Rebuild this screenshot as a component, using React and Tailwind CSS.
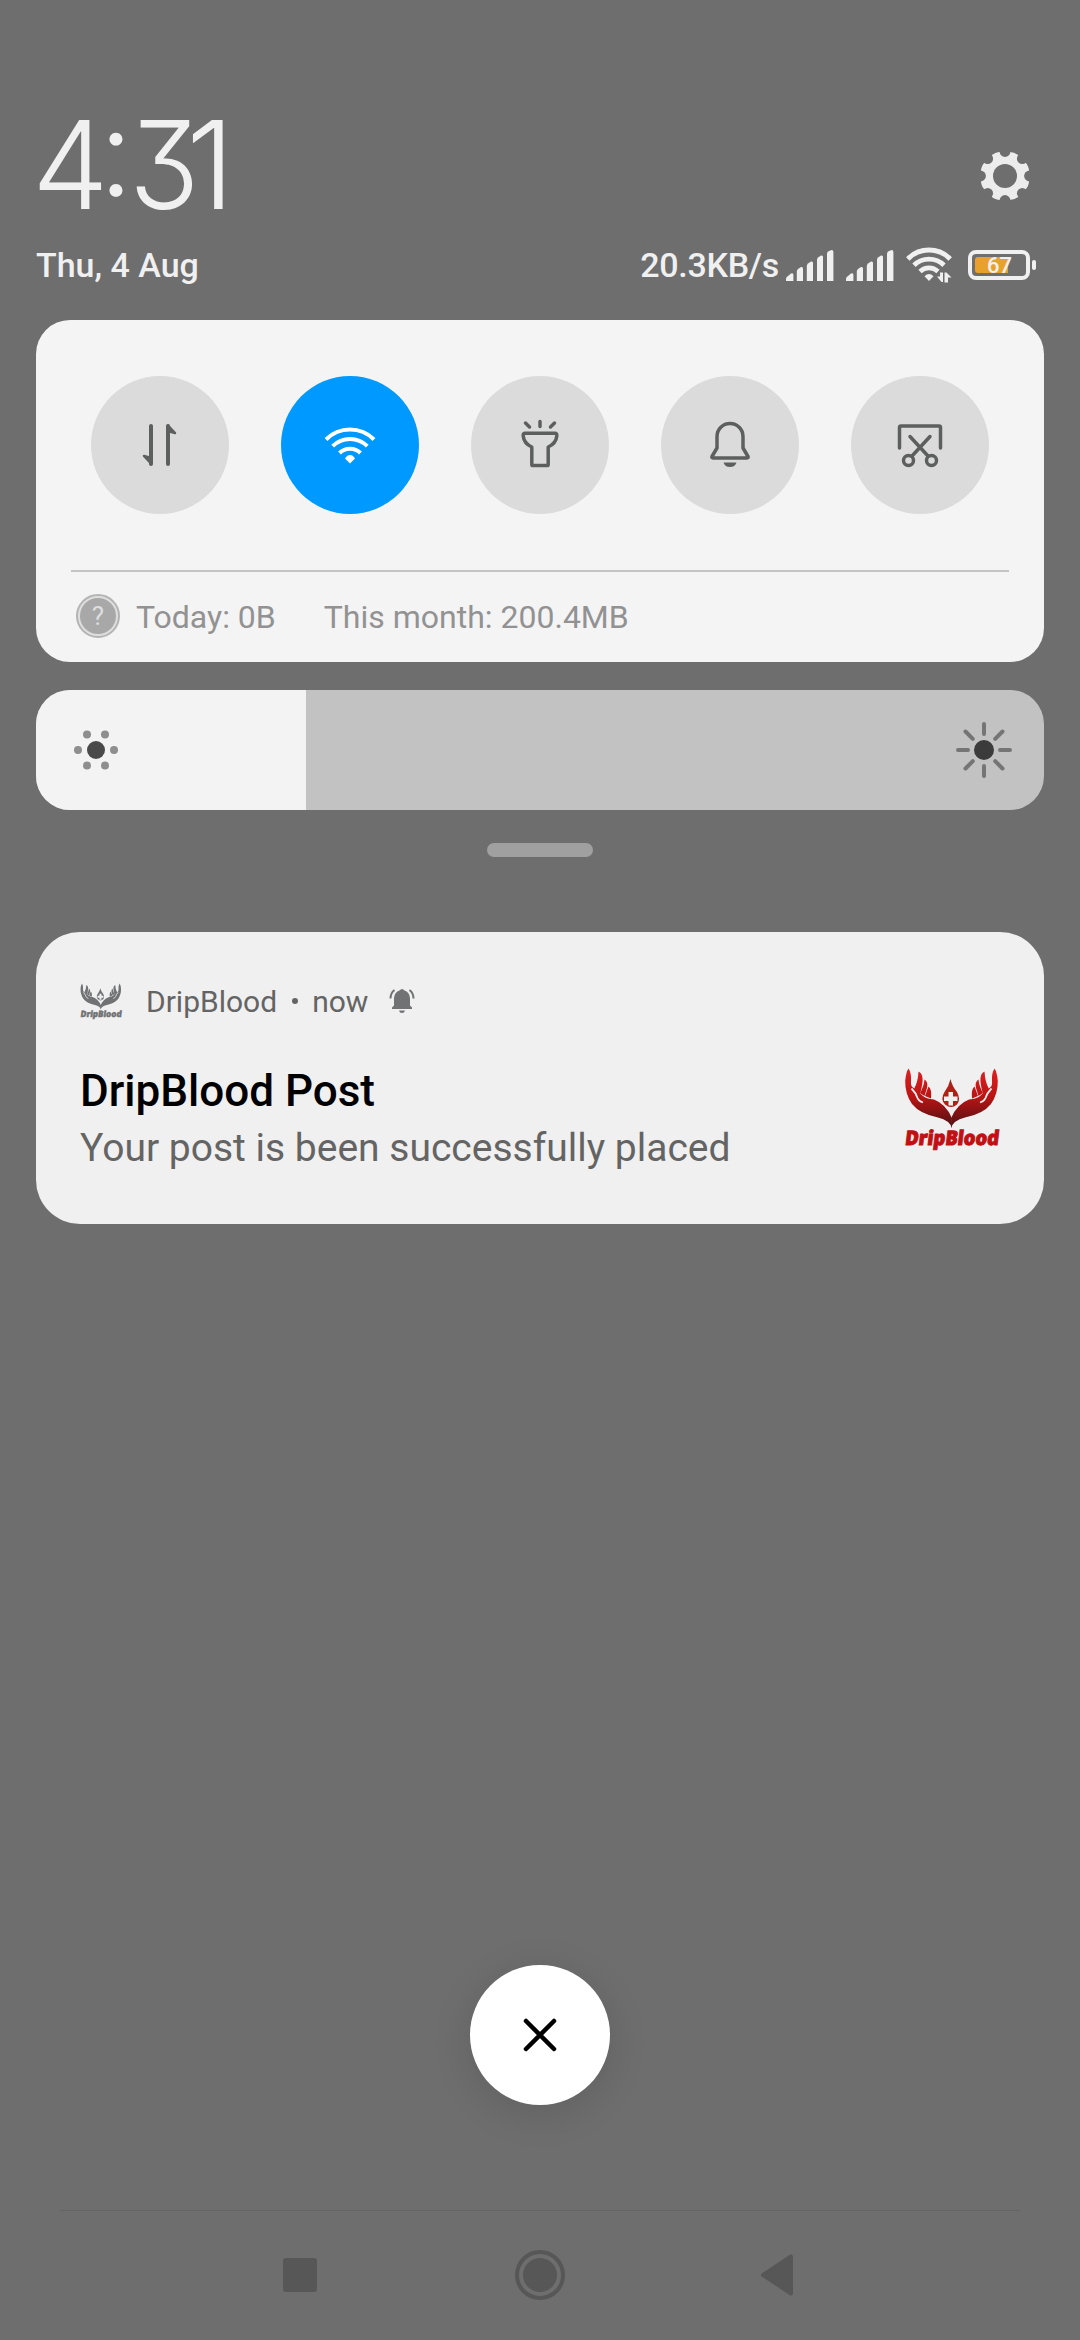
import React from "react";

function Clock() {
  return (
    <div className="flex h-[122px] items-start font-['Inter'] text-[122px] leading-[122px] font-[290] text-[#f0f0f0] [font-feature-settings:'cv09','case']">
      <span className="ml-[-4px] tracking-[-10px]">4</span>
      <span className="tracking-[-4px]">:</span>
      <span className="origin-left scale-x-[0.95] tracking-[-17px]">3</span>
      <span>1</span>
    </div>
  );
}

function Gear() {
  const teeth = [22.5, 67.5, 112.5, 157.5, 202.5, 247.5, 292.5, 337.5];
  const notches = [0, 45, 90, 135, 180, 225, 270, 315];
  return (
    <svg className="size-[50px]" viewBox="-25 -25 50 50">
      <defs>
        <mask id="gear">
          <circle r="20.5" fill="#fff" />
          {teeth.map((a) => (
            <path key={a} d="M-9 -14 L-5 -24 Q0 -26 5 -24 L9 -14Z" fill="#fff" transform={`rotate(${a})`} />
          ))}
          {notches.map((a) => (
            <circle key={a} cx="0" cy="-24.5" r="5.4" fill="#000" transform={`rotate(${a})`} />
          ))}
          <circle r="12" fill="#000" />
        </mask>
      </defs>
      <rect x="-25" y="-25" width="50" height="50" fill="#ececec" mask="url(#gear)" />
    </svg>
  );
}

function Signal({ className }) {
  return (
    <svg className={className} width="48" height="31" viewBox="0 0 48 31" fill="#f0f0f0">
      <path d="M0 31V29Q0 27 2 26L5 23.6Q7.400 22.500 7.400 25V31Z" />
      <path d="M10.800 31V21.500Q10.800 20 12 19L15 17Q17 16.500 17 18.500V31Z" />
      <path d="M20.800 31V16Q20.800 14.500 22 13.500L25 11.500Q27 11 27 13V31Z" />
      <path d="M31 31V10Q31 8.500 32 7.500L35 5.500Q37 5 37 7V31Z" />
      <path d="M41 31V4Q41 2.500 42 1.500L45 0.200Q47.400 -.3 47.400 2V31Z" />
    </svg>
  );
}

function StatusWifi({ className }) {
  return (
    <svg className={className} width="47" height="36" viewBox="0 0 47 36" fill="none" stroke="#f0f0f0">
      <path d="M1.800 12A29.500 29.500 0 0 1 44.200 12" strokeWidth="4.800" />
      <path d="M8 18.200A21.500 21.500 0 0 1 38 18.200" strokeWidth="4.800" />
      <path d="M14 24.500A13 13 0 0 1 32 24.500" strokeWidth="4.600" />
      <path d="M18.500 29.300Q23 24.500 27.500 29.300L23 34Z" fill="#f0f0f0" stroke="none" />
      <path d="M31 29.500H34V25.500H37V35H35.500ZM38.500 35.500V25.500H40.500L45.500 30.500H42V35.500Z" fill="#f0f0f0" stroke="none" />
    </svg>
  );
}

function Battery({ className }) {
  return (
    <div className={`flex items-center gap-[2px] ${className}`}>
      <div className="relative h-[30px] w-[62px] rounded-[8px] border-4 border-[#f0f0f0]">
        <div className="mt-[3px] ml-[3px] h-4 w-[33px] rounded-l-[3px] bg-[#e8a22c]" />
        <span className="absolute top-0 left-[15px] font-['Roboto'] text-[22px] leading-6 font-medium text-[#f0f0f0]">67</span>
      </div>
      <div className="h-[10px] w-1 rounded-[2px] bg-[#f0f0f0]" />
    </div>
  );
}

const icons = {
  data: (
    <g fill="#5d5f5f" stroke="#5d5f5f" strokeWidth="4" strokeLinecap="round" strokeLinejoin="round">
      <path d="M-9 -19V19" />
      <path d="M-16 11L-9 13V18.500Z" strokeWidth="2.500" />
      <path d="M8 19V-19" />
      <path d="M15 -12L8 -14V-19.500Z" strokeWidth="2.500" />
    </g>
  ),
  wifi: (
    <g fill="none" stroke="#fff" strokeWidth="4">
      <path d="M-24 -5.500A34 34 0 0 1 24 -5.500" />
      <path d="M-17.300 1.200A24.500 24.500 0 0 1 17.300 1.200" />
      <path d="M-10.500 8A15 15 0 0 1 10.500 8" />
      <path d="M-5 13.500L-3 11Q0 9 3 11L5 13.500L0 18.500Z" fill="#fff" stroke="none" />
    </g>
  ),
  torch: (
    <g fill="none" stroke="#5d5f5f" strokeWidth="3.500" strokeLinecap="round" strokeLinejoin="round">
      <path d="M-15.500 -11.800H15.500Q17 -11.800 16.800 -9Q16 -1.500 8.200 2V19.500Q8.200 20.600 7 20.600H-7Q-8.200 20.600 -8.200 19.500V2Q-16 -1.500 -16.800 -9Q-17 -11.800 -15.500 -11.800Z" />
      <path d="M0 -23.500V-18.500M-14.500 -22L-10.500 -18M14.500 -22L10.500 -18" />
    </g>
  ),
  bell: (
    <g fill="none" stroke="#5d5f5f" strokeWidth="3.500" strokeLinecap="round" strokeLinejoin="round">
      <path d="M-13 3V-8.500A13 13 0 0 1 13 -8.500V3L18 11.500Q18.600 13 17 13H-17Q-18.600 13 -18 11.500Z" />
      <path d="M-6.500 17.500H6.500Q5 22 0 22Q-5 22 -6.500 17.500Z" fill="#5d5f5f" stroke="none" />
    </g>
  ),
  shot: (
    <g fill="none" stroke="#5d5f5f" strokeWidth="3.500" strokeLinecap="round" strokeLinejoin="round">
      <path d="M-20.500 3V-17.500Q-20.500 -19 -19 -19H19Q20.500 -19 20.500 -17.500V3" />
      <path d="M-10 -8.500L8 11M10 -8.500L-8 11" />
      <circle cx="-11.500" cy="15.500" r="5" />
      <circle cx="11.500" cy="15.500" r="5" />
    </g>
  ),
};

function Toggle({ icon, active }) {
  return (
    <div className={`flex size-[138px] items-center justify-center rounded-full ${active ? "bg-[#0099ff]" : "bg-[#dbdbdb]"}`}>
      <svg width="60" height="60" viewBox="-30 -30 60 60">{icons[icon]}</svg>
    </div>
  );
}

function Hand({ fill, cut }) {
  return (
    <g fill={fill}>
      <path d="M47.800 60Q46 52.500 34 49.500Q16 46 8 36Q1 26 1.200 13Q2 4 4.500 0.500Q7.500 5 7 13Q6.500 18 9 19.500Q14 23 19 28Q22 30.500 30 31.500Q42 36 47.800 50Z" />
      <path d="M10 21Q14 14 14.500 3.500Q19.500 6 18.500 14Q18 19 16 26Z" />
      <path d="M16 25Q20 18 20.500 11.500Q24.500 14 23 20L20.500 28Z" />
      <path d="M21 28L24.500 18.500Q28 21 27 30.500Z" />
      <path d="M7.500 20.500Q12 25 13.500 30Q15 33.500 19 34.500" fill="none" stroke={cut} strokeWidth="1.800" />
    </g>
  );
}

function Logo({ className = "", width, height, hand, drop, text, cut, id }) {
  return (
    <svg className={`overflow-visible ${className}`} width={width} height={height} viewBox="0 0 96 83">
      <defs>
        <linearGradient id={id} x1="0" y1="0" x2="0" y2="60" gradientUnits="userSpaceOnUse">
          <stop offset="0" stopColor={hand[0]} />
          <stop offset="0.500" stopColor={hand[1]} />
          <stop offset="1" stopColor={hand[2]} />
        </linearGradient>
      </defs>
      <Hand fill={`url(#${id})`} cut={cut} />
      <g transform="translate(95 0) scale(-1 1)">
        <Hand fill={`url(#${id})`} cut={cut} />
      </g>
      <path d="M46.500 11Q48 18 53 24Q57 31 53 36.500Q47 41.500 41 36.500Q36 31 40.500 24Q45 18 46.500 11Z" fill={drop} />
      <path d="M44.500 24H49V28.500H53.500V33H49V37.500H44.500V33H40V28.500H44.500Z" fill={cut} />
      <text x="0" y="0" transform="translate(0.500 77.300) skewX(-7)" textLength="94" lengthAdjust="spacingAndGlyphs" fontFamily="Open Sans" fontWeight="800" fontSize="20" fill={text} stroke={text} strokeWidth="1">
        DripBlood
      </text>
    </svg>
  );
}

function Header() {
  return (
    <header>
      <div className="flex h-[240px] items-start justify-between pt-[104px] pr-[50px] pl-9">
        <Clock />
        <div className="pt-[47px]">
          <Gear />
        </div>
      </div>
      <div className="flex h-[50px] items-center pr-11 pl-9 text-[34px] leading-[50px] font-medium text-[#f0f0f0]">
        <span>Thu, 4 Aug</span>
        <div className="ml-auto flex h-[50px] items-center">
          <span className="tracking-[-0.300px]">20.3KB/s</span>
          <Signal className="ml-[7px]" />
          <Signal className="ml-3" />
          <StatusWifi className="ml-3" />
          <Battery className="ml-[15px]" />
        </div>
      </div>
    </header>
  );
}

export default function App() {
  return (
    <div className="flex h-[2340px] w-[1080px] flex-col overflow-hidden bg-[#6e6e6e] font-['Roboto',sans-serif]">
      <Header />

      <section className="mx-9 mt-[30px] flex h-[342px] flex-col rounded-[34px] bg-[#f4f4f4] pt-14">
        <div className="flex justify-between px-[55px]">
          <Toggle icon="data" />
          <Toggle icon="wifi" active />
          <Toggle icon="torch" />
          <Toggle icon="bell" />
          <Toggle icon="shot" />
        </div>
        <div className="mx-[35px] mt-14 h-[2px] bg-[#c4c4c4]" />
        <div className="mt-[22px] flex h-11 items-center pl-10 text-[32px] leading-[44px] text-[#929292]">
          <div className="flex size-11 items-center justify-center rounded-full border-2 border-[#b4b4b4] bg-[#dedede]">
            <div className="flex size-9 items-center justify-center rounded-full bg-[#a8a8a8] text-[26px] leading-9 text-[#dedede]">?</div>
          </div>
          <span className="ml-4 pt-px">Today: 0B</span>
          <span className="ml-12 pt-px">This month: 200.4MB</span>
        </div>
      </section>

      <section className="mx-9 mt-7 flex h-[120px] overflow-hidden rounded-[34px] bg-[#c2c2c2]">
        <div className="flex w-[270px] items-center bg-[#f3f3f3] pl-[36px]">
          <svg width="48" height="48" viewBox="-24 -24 48 48" fill="#8e8e8e">
            <circle r="9" fill="#4a4a4a" />
            <circle cx="-18" r="4" />
            <circle cx="18" r="4" />
            <circle cx="-9" cy="-15.600" r="4" />
            <circle cx="9" cy="-15.600" r="4" />
            <circle cx="-9" cy="15.600" r="4" />
            <circle cx="9" cy="15.600" r="4" />
          </svg>
        </div>
        <div className="flex flex-1 items-center justify-end pr-[30px]">
          <svg width="60" height="60" viewBox="-30 -30 60 60" stroke="#757575" strokeWidth="4" strokeLinecap="round">
            <circle r="10" fill="#3b3b3b" stroke="none" />
            <path d="M0 -26V-16M0 26V16M-26 0H-16M26 0H16M-18.500 -18.500L-11.200 -11.200M18.500 -18.500L11.200 -11.200M-18.500 18.500L-11.200 11.200M18.500 18.500L11.200 11.200" />
          </svg>
        </div>
      </section>

      <div className="mx-auto mt-[33px] h-[14px] w-[106px] rounded-full bg-[#a0a0a0]" />

      <section className="mx-9 mt-[75px] h-[292px] rounded-[44px] bg-[#f0f0f0] pr-11 pl-11">
        <div className="flex h-[138px] items-center text-[30px] leading-[40px] text-[#646464]">
          <Logo id="mono" width="42" height="37" hand={["#707274", "#707274", "#707274"]} drop="#707274" text="#707274" cut="#f0f0f0" />
          <span className="ml-6 pt-px">DripBlood</span>
          <span className="ml-[15px] size-[6px] rounded-full bg-[#646464]" />
          <span className="ml-[14px] pt-px">now</span>
          <svg className="ml-[21px]" width="26" height="26" viewBox="0 0 26 26" fill="#707274">
            <path d="M3 19.500L5 17.500V10Q5.500 4 10.500 2.500Q13 -.5 15.500 2.500Q20.500 4 21 10V17.500L23 19.500V21H3ZM10 22.500H16Q15.500 25 13 25Q10.500 25 10 22.500Z" />
            <path d="M1.500 10.500Q1.500 5 5.500 2M24.500 10.500Q24.500 5 20.500 2" fill="none" stroke="#707274" strokeWidth="2" />
          </svg>
        </div>
        <div className="flex items-start justify-between">
          <div>
            <h1 className="mt-[-7px] text-[44px] leading-[56px] font-medium text-black">DripBlood Post</h1>
            <p className="text-[39px] leading-[58px] text-[#646464]">Your post is been successfully placed</p>
          </div>
          <Logo id="red" className="mt-[-2px]" width="96" height="83" hand={["#e02020", "#b81414", "#4a1014"]} drop="#b02015" text="#c01014" cut="#f0f0f0" />
        </div>
      </section>

      <div className="mx-auto mt-[741px] flex size-[140px] items-center justify-center rounded-full bg-white shadow-[0_8px_40px_rgba(0,0,0,0.12)]">
        <svg width="40" height="40" viewBox="-20 -20 40 40" stroke="#000" strokeWidth="4.500" strokeLinecap="round">
          <path d="M-14 -14L14 14M14 -14L-14 14" />
        </svg>
      </div>

      <nav className="mx-15 mt-[105px] flex items-center justify-between border-t border-[#646464] pt-[39px] pr-[226px] pl-[223px]">
        <div className="size-[34px] rounded-[3px] bg-[#575757]" />
        <div className="ml-[3px] flex size-[50px] items-center justify-center rounded-full border-4 border-[#575757]">
          <div className="size-[34px] rounded-full bg-[#575757]" />
        </div>
        <svg width="34" height="44" viewBox="0 0 34 44" fill="#575757" stroke="#575757" strokeWidth="4" strokeLinejoin="round">
          <path d="M3 22L31 3.500V40.500Z" />
        </svg>
      </nav>
    </div>
  );
}
